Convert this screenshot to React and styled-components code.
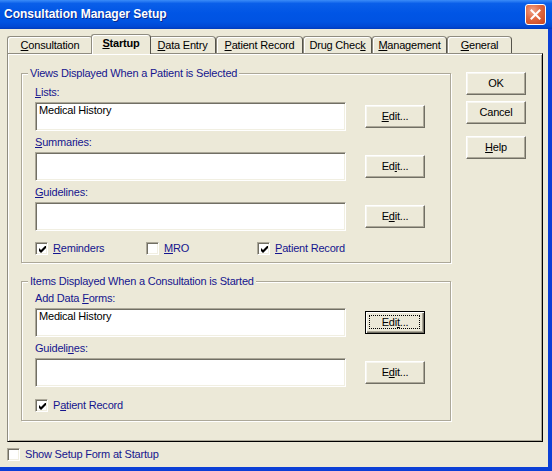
import React from 'react';
import styled, { createGlobalStyle, css } from 'styled-components';

const GlobalStyle = createGlobalStyle`
  * { box-sizing: border-box; }
  html, body { margin: 0; padding: 0; background: #ece9d8; }
  body { font-family: "Liberation Sans", Arial, sans-serif; font-size: 11px; }
`;

const NAVY = '#15158e';

const Window = styled.div`
  width: 552px;
  height: 471px;
  display: flex;
  flex-direction: column;
  background: #ece9d8;
  overflow: hidden;
  font-family: "Liberation Sans", Arial, sans-serif;
  font-size: 11px;
  letter-spacing: -0.2px;
  line-height: 13px;
  color: #000;
`;

const TitleBar = styled.div`
  height: 29px;
  flex: none;
  display: flex;
  align-items: center;
  justify-content: space-between;
  padding: 0 6px 0 4px;
  background: linear-gradient(
    to bottom,
    #3b8cf8 0%,
    #0a5fe9 12%,
    #0055e5 45%,
    #0053e2 75%,
    #0048d4 92%,
    #003bbd 100%
  );
`;

const Title = styled.div`
  color: #fff;
  font-weight: bold;
  font-size: 12px;
  letter-spacing: 0;
  text-shadow: 1px 1px 0 #0c2a8e;
  padding-bottom: 1px;
`;

const CloseButton = styled.div`
  width: 21px;
  height: 21px;
  border: 1px solid #fff;
  border-radius: 3px;
  background: radial-gradient(circle at 35% 30%, #f0a48a 0%, #e06840 45%, #c8431c 100%);
  display: flex;
  align-items: center;
  justify-content: center;
  margin-top: -1px;
`;

const Client = styled.div`
  flex: 1;
  display: flex;
  flex-direction: column;
  padding: 5px 0 0 7px;
  border-right: 4px solid #0b3fd6;
  border-bottom: 4px solid #0b3fd6;
`;

const TabStrip = styled.div`
  display: flex;
  align-items: flex-end;
  height: 20px;
  position: relative;
  z-index: 1;
`;

const Tab = styled.div`
  flex: none;
  width: ${p => p.$w}px;
  height: 17px;
  margin-bottom: 1px;
  border: 1px solid #8f8c80;
  border-bottom: none;
  border-right-color: #55534b;
  border-radius: 3px 4px 0 0;
  box-shadow: inset 1px 1px 0 #fff;
  background: #ece9d8;
  display: flex;
  align-items: center;
  justify-content: center;
  white-space: nowrap;
  ${p =>
    p.$active &&
    css`
      width: ${p.$w + 4}px;
      height: 20px;
      margin: 0 -2px;
      font-weight: bold;
      position: relative;
      z-index: 2;
      padding-bottom: 2px;
    `}
`;

const U = styled.span`
  text-decoration: underline;
  text-underline-offset: 1px;
`;

const Panel = styled.div`
  width: 536px;
  height: 389px;
  margin-top: -1px;
  border: 1px solid;
  border-color: #8f8c80 #000 #000 #8f8c80;
  box-shadow: inset 1px 1px 0 #fff, inset -1px -1px 0 #aca899;
  display: flex;
  align-items: flex-start;
  padding: 18px 0 0 13px;
`;

const Groups = styled.div`
  display: flex;
  flex-direction: column;
  padding-top: 1px;
`;

const GroupBox = styled.div`
  position: relative;
  width: 430px;
  border: 1px solid #aca899;
  box-shadow: inset 1px 1px 0 #fff, 1px 1px 0 #fff;
  padding: ${p => p.$pt}px 0 ${p => p.$pb}px 13px;
  & + & {
    margin-top: 18px;
  }
`;

const Legend = styled.div`
  position: absolute;
  top: -7px;
  left: 6px;
  padding: 0 2px;
  background: #ece9d8;
  color: ${NAVY};
  white-space: nowrap;
`;

const Field = styled.div`
  display: flex;
  flex-direction: column;
  & + & {
    margin-top: 5px;
  }
`;

const Label = styled.div`
  color: ${NAVY};
  height: 13px;
  margin-bottom: 3px;
`;

const FieldRow = styled.div`
  display: flex;
  align-items: center;
  gap: 19px;
`;

const TextBox = styled.div`
  width: 311px;
  height: 29px;
  background: #fff;
  border: 1px solid;
  border-color: #aca899 #fff #fff #aca899;
  box-shadow: inset 1px 1px 0 #716f64, inset -1px -1px 0 #f1efe2;
  padding: 1px 0 0 3px;
  color: #000;
`;

const Button = styled.div`
  flex: none;
  width: 60px;
  height: 23px;
  position: relative;
  background: #ece9d8;
  color: #000;
  border: 1px solid;
  border-color: #fff #716f64 #716f64 #fff;
  box-shadow: inset -1px -1px 0 #aca899, inset 1px 1px 0 #f7f6f0;
  display: flex;
  align-items: center;
  justify-content: center;
  margin-top: ${p => p.$mt || 0}px;
  ${p =>
    p.$focused &&
    css`
      border-color: #000;
      box-shadow: inset 1px 1px 0 #fff, inset -1px -1px 0 #716f64, inset -2px -2px 0 #aca899;
      &::after {
        content: '';
        position: absolute;
        left: 3px;
        top: 3px;
        right: 4px;
        bottom: 4px;
        border: 1px dotted #000;
      }
    `}
`;

const SideButtons = styled.div`
  display: flex;
  flex-direction: column;
  margin-left: 15px;
`;

const CheckRow = styled.div`
  display: flex;
  margin-top: ${p => p.$mt}px;
`;

const CheckItem = styled.div`
  display: flex;
  align-items: center;
  gap: 5px;
  width: ${p => (p.$w ? `${p.$w}px` : 'auto')};
  color: ${NAVY};
  height: 13px;
  white-space: nowrap;
`;

const Box = styled.div`
  flex: none;
  width: 13px;
  height: 13px;
  background: #fff;
  border: 1px solid;
  border-color: #aca899 #fff #fff #aca899;
  box-shadow: inset 1px 1px 0 #716f64, inset -1px -1px 0 #f1efe2;
  display: flex;
  align-items: center;
  justify-content: center;
`;

const Footer = styled.div`
  margin-top: 6px;
`;

const Check = ({ checked }) => (
  <Box>
    {checked && (
      <svg width="7" height="7" viewBox="0 0 7 7" style={{ display: 'block', marginLeft: '1px', marginTop: '1px' }}>
        <path d="M0 2 L2 4 L7 -1 L7 2 L2 7 L0 5 Z" fill="#000" />
      </svg>
    )}
  </Box>
);

const CheckBox = ({ checked, w, children }) => (
  <CheckItem $w={w}>
    <Check checked={checked} />
    <span>{children}</span>
  </CheckItem>
);

const tabs = [
  { w: 86, label: <><U>C</U>onsultation</> },
  { w: 56, label: <><U>S</U>tartup</>, active: true },
  { w: 67, label: <><U>D</U>ata Entry</> },
  { w: 87, label: <><U>P</U>atient Record</> },
  { w: 69, label: <>Drug Chec<U>k</U></> },
  { w: 75, label: <><U>M</U>anagement</> },
  { w: 65, label: <><U>G</U>eneral</> },
];

const EditField = ({ label, value, edit, focused }) => (
  <Field>
    <Label>{label}</Label>
    <FieldRow>
      <TextBox>{value}</TextBox>
      <Button $focused={focused}>{edit}</Button>
    </FieldRow>
  </Field>
);

export default function App() {
  return (
    <>
      <GlobalStyle />
      <Window>
        <TitleBar>
          <Title>Consultation Manager Setup</Title>
          <CloseButton>
            <svg width="11" height="11" viewBox="0 0 11 11">
              <path d="M1.5 1.5 L9.5 9.5 M9.5 1.5 L1.5 9.5" stroke="#fff" strokeWidth="2" strokeLinecap="square" />
            </svg>
          </CloseButton>
        </TitleBar>
        <Client>
          <TabStrip>
            {tabs.map((t, i) => (
              <Tab key={i} $w={t.w} $active={t.active}>
                {t.label}
              </Tab>
            ))}
          </TabStrip>
          <Panel>
            <Groups>
              <GroupBox $pt={12} $pb={7}>
                <Legend>Views Displayed When a Patient is Selected</Legend>
                <EditField
                  label={<><U>L</U>ists:</>}
                  value="Medical History"
                  edit={<><U>E</U>dit...</>}
                />
                <EditField
                  label={<><U>S</U>ummaries:</>}
                  edit={<>Ed<U>i</U>t...</>}
                />
                <EditField
                  label={<><U>G</U>uidelines:</>}
                  edit={<>E<U>d</U>it...</>}
                />
                <CheckRow $mt={11}>
                  <CheckBox checked w={111}><U>R</U>eminders</CheckBox>
                  <CheckBox w={111}><U>M</U>RO</CheckBox>
                  <CheckBox checked><U>P</U>atient Record</CheckBox>
                </CheckRow>
              </GroupBox>
              <GroupBox $pt={10} $pb={8}>
                <Legend>Items Displayed When a Consultation is Started</Legend>
                <EditField
                  label={<>Add Data <U>F</U>orms:</>}
                  value="Medical History"
                  edit={<>Edi<U>t</U>...</>}
                  focused
                />
                <EditField
                  label={<>Guideli<U>n</U>es:</>}
                  edit={<>E<U>d</U>it...</>}
                />
                <CheckRow $mt={12}>
                  <CheckBox checked>P<U>a</U>tient Record</CheckBox>
                </CheckRow>
              </GroupBox>
            </Groups>
            <SideButtons>
              <Button>OK</Button>
              <Button $mt={6}>Cancel</Button>
              <Button $mt={12}><U>H</U>elp</Button>
            </SideButtons>
          </Panel>
          <Footer>
            <CheckBox>Show Setup Form at Startup</CheckBox>
          </Footer>
        </Client>
      </Window>
    </>
  );
}
